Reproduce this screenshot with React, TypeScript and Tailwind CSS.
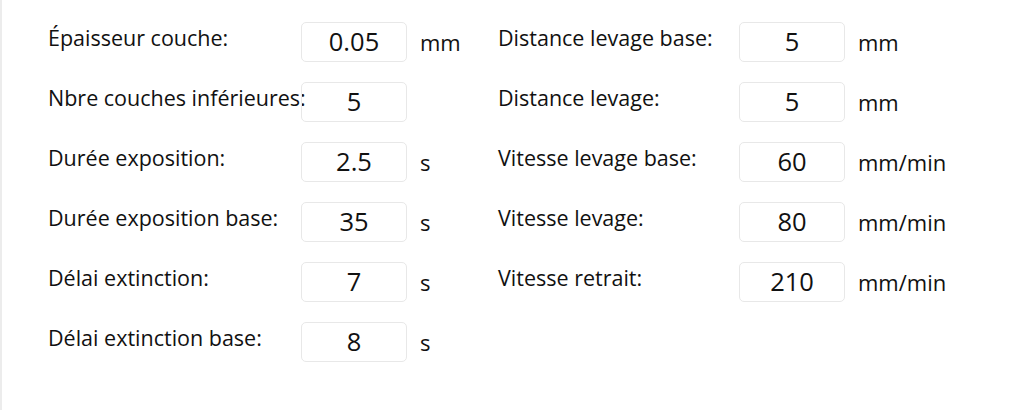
const left = [
  { label: "Épaisseur couche:", value: "0.05", unit: "mm" },
  { label: "Nbre couches inférieures:", value: "5", unit: "" },
  { label: "Durée exposition:", value: "2.5", unit: "s" },
  { label: "Durée exposition base:", value: "35", unit: "s" },
  { label: "Délai extinction:", value: "7", unit: "s" },
  { label: "Délai extinction base:", value: "8", unit: "s" },
];

const right = [
  { label: "Distance levage base:", value: "5", unit: "mm" },
  { label: "Distance levage:", value: "5", unit: "mm" },
  { label: "Vitesse levage base:", value: "60", unit: "mm/min" },
  { label: "Vitesse levage:", value: "80", unit: "mm/min" },
  { label: "Vitesse retrait:", value: "210", unit: "mm/min" },
];

function Row({ label, value, unit, labelW }: { label: string; value: string; unit: string; labelW: string }) {
  return (
    <div className="flex items-start h-10">
      <div className={`${labelW} shrink-0 pt-[2px] text-[21.5px] leading-[28px] whitespace-nowrap`}>{label}</div>
      <div className="w-[106px] h-10 shrink-0 border border-[#e8e8e8] rounded-[5px] flex items-center justify-center text-[25.5px] leading-none">
        {value}
      </div>
      <div className="ml-[13px] pt-[6px] text-[22px] leading-[28px]">{unit}</div>
    </div>
  );
}

export default function App() {
  return (
    <div
      className="w-[1031px] h-[410px] bg-white border-l-2 border-[#ececec] text-[#111] overflow-hidden"
      style={{ fontFamily: '"Open Sans", "Noto Sans", sans-serif' }}
    >
      <div className="flex pt-[22px] pl-[46px]">
        <div className="w-[450px] flex flex-col gap-5">
          {left.map((r) => (
            <Row key={r.label} {...r} labelW="w-[253px]" />
          ))}
        </div>
        <div className="flex flex-col gap-5">
          {right.map((r) => (
            <Row key={r.label} {...r} labelW="w-[241px]" />
          ))}
        </div>
      </div>
    </div>
  );
}
